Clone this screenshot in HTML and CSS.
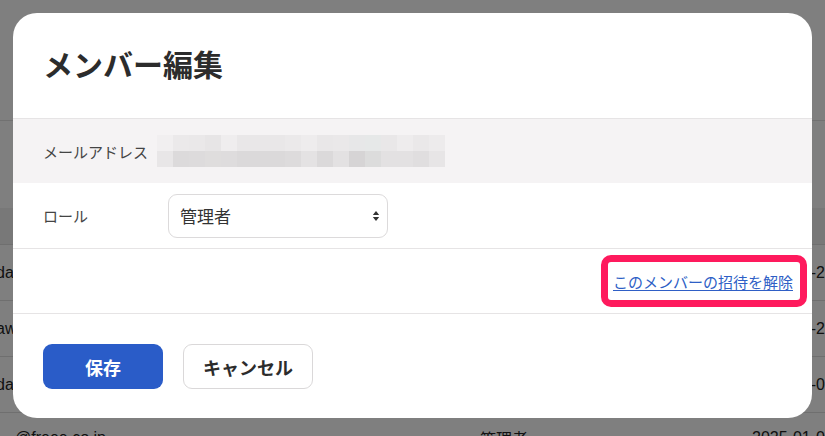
FILE: index.html
```html
<!DOCTYPE html>
<html lang="ja">
<head>
<meta charset="utf-8">
<title>メンバー編集</title>
<link rel="stylesheet" href="styles.css">
</head>
<body>
<div class="page">
  <div class="page-top"></div>
  <div class="page-gap"></div>
  <div class="thead"></div>
  <div class="trow"><span class="c-mail">da@</span><span class="c-role">管理者</span><span class="c-date">2025-01-21</span></div>
  <div class="trow"><span class="c-mail">aw@</span><span class="c-role">管理者</span><span class="c-date">2025-01-21</span></div>
  <div class="trow"><span class="c-mail">da@</span><span class="c-role">管理者</span><span class="c-date">2025-01-08</span></div>
  <div class="trow trow-last"><span class="c-mail c-mail-indent">@freee.co.jp</span><span class="c-role">管理者</span><span class="c-date">2025-01-08</span></div>
</div>

<div class="overlay">
  <div class="modal">
    <div class="modal-head">
      <h1 class="modal-title">メンバー編集</h1>
    </div>
    <div class="field field-shaded">
      <div class="field-label">メールアドレス</div>
      <div class="mosaic">
        <i style="background:#f1eff0"></i><i style="background:#ebe9ea"></i><i style="background:#eae8e9"></i><i style="background:#e7e5e6"></i><i style="background:#efedee"></i><i style="background:#e9e7e8"></i><i style="background:#e9e7e8"></i><i style="background:#e9e7e8"></i><i style="background:#ebe9ea"></i><i style="background:#eeeced"></i><i style="background:#e9e7e8"></i><i style="background:#eae8e9"></i><i style="background:#e7e7e8"></i><i style="background:#e6e8e8"></i><i style="background:#e9e7e8"></i><i style="background:#eeeced"></i><i style="background:#eae8e9"></i><i style="background:#edebec"></i>
        <i style="background:#e8e6e7"></i><i style="background:#dcdadb"></i><i style="background:#dddbdc"></i><i style="background:#dfdddd"></i><i style="background:#dedcdd"></i><i style="background:#dbd9da"></i><i style="background:#dbd9da"></i><i style="background:#dbd9da"></i><i style="background:#dddbdc"></i><i style="background:#e4e2e3"></i><i style="background:#dbd9da"></i><i style="background:#e3e1e2"></i><i style="background:#d6d4d5"></i><i style="background:#dcdcdc"></i><i style="background:#e3e1e2"></i><i style="background:#e3e1e2"></i><i style="background:#e0dedf"></i><i style="background:#e7e5e6"></i>
      </div>
    </div>
    <div class="field field-bordered">
      <div class="field-label">ロール</div>
      <div class="select">
        <span class="select-value">管理者</span>
        <svg class="select-arrows" width="8" height="12" viewBox="0 0 8 12" aria-hidden="true">
          <path d="M4 1 L7.2 5 H0.8 Z" fill="#333"/>
          <path d="M4 11 L7.2 7 H0.8 Z" fill="#333"/>
        </svg>
      </div>
    </div>
    <div class="link-row">
      <a class="revoke-link" href="#">このメンバーの招待を解除</a>
    </div>
    <div class="modal-foot">
      <button class="btn btn-primary" type="button">保存</button>
      <button class="btn btn-secondary" type="button">キャンセル</button>
    </div>
    <div class="highlight"></div>
  </div>
</div>
</body>
</html>
```

FILE: styles.css
```css
* { box-sizing: border-box; }

html, body {
  margin: 0;
  padding: 0;
  width: 825px;
  height: 436px;
  overflow: hidden;
  background: #ffffff;
  font-family: "Liberation Sans", "Noto Sans CJK JP", sans-serif;
  color: #333333;
}

/* underlying page */
.page {
  width: 825px;
  height: 436px;
  overflow: hidden;
}
.page-top {
  height: 121px;
  border-bottom: 1px solid #e2e2e2;
}
.page-gap {
  height: 87px;
}
.thead {
  height: 37px;
  background: #f1f1f1;
  border-bottom: 1px solid #dedede;
}
.trow {
  height: 56px;
  border-bottom: 1px solid #dedede;
  display: flex;
  align-items: center;
  font-size: 16px;
  color: #222;
}
.trow-last {
  height: 23px;
  align-items: flex-start;
  border-bottom: none;
  overflow: hidden;
  padding-top: 16px;
}
.c-mail {
  flex: 0 0 484px;
  margin-left: -4px;
  white-space: nowrap;
  overflow: hidden;
}
.c-mail-indent {
  padding-left: 19px;
}
.c-role {
  flex: 0 0 272px;
  font-family: "Noto Sans CJK JP", sans-serif;
  line-height: 1.2;
}
.c-date {
  flex: 0 0 auto;
  white-space: nowrap;
}

/* overlay + modal */
.overlay {
  position: fixed;
  inset: 0;
  background: rgba(0, 0, 0, 0.5);
  padding: 13px;
  display: flex;
  align-items: flex-start;
  justify-content: flex-start;
}
.modal {
  position: relative;
  width: 799px;
  background: #ffffff;
  border-radius: 24px;
  font-family: "Noto Sans CJK JP", sans-serif;
}
.modal-head {
  height: 106px;
  border-bottom: 1px solid #e6e4e5;
  display: flex;
  align-items: center;
  padding: 0 30px 6px;
}
.modal-title {
  margin: 0;
  font-size: 30px;
  line-height: 1;
  font-weight: 700;
  color: #2c2c2c;
}

.field {
  display: flex;
  align-items: center;
  padding: 0 30px;
}
.field-shaded {
  height: 64px;
  background: #f5f3f4;
}
.field-bordered {
  height: 66px;
  border-bottom: 1px solid #e6e4e5;
}
.field-label {
  width: 125px;
  font-size: 15px;
  color: #444444;
}
.field-shaded .field-label {
  width: 114px;
}
.mosaic {
  display: grid;
  grid-template-columns: repeat(18, 16px);
  grid-template-rows: repeat(2, 16px);
}
.mosaic i {
  display: block;
}

.select {
  width: 220px;
  height: 44px;
  border: 1px solid #dcdadb;
  border-radius: 9px;
  display: flex;
  align-items: center;
  justify-content: space-between;
  padding: 0 7px 0 11px;
  background: #fff;
}
.select-value {
  font-size: 17px;
  color: #333;
}
.select-arrows {
  display: block;
}

.link-row {
  height: 65px;
  border-bottom: 1px solid #e6e4e5;
  display: flex;
  align-items: center;
  justify-content: flex-end;
  padding-right: 19px;
}
.revoke-link {
  font-size: 15px;
  color: #2f5fc6;
  text-decoration: underline;
  text-underline-offset: 2px;
}

.modal-foot {
  height: 104px;
  display: flex;
  align-items: flex-start;
  gap: 20px;
  padding: 30px 30px 0;
}
.btn {
  height: 45px;
  border-radius: 9px;
  font-family: "Noto Sans CJK JP", sans-serif;
  font-size: 18px;
  font-weight: 700;
  cursor: pointer;
}
.btn-primary {
  width: 120px;
  background: #2a5cc8;
  color: #ffffff;
  border: none;
}
.btn-secondary {
  width: 130px;
  background: #ffffff;
  color: #2c2c2c;
  border: 1px solid #dad8d9;
}

.highlight {
  position: absolute;
  left: 588px;
  top: 242px;
  width: 206px;
  height: 52px;
  border: 7px solid #fe1a5d;
  border-radius: 10px;
  pointer-events: none;
}
```
